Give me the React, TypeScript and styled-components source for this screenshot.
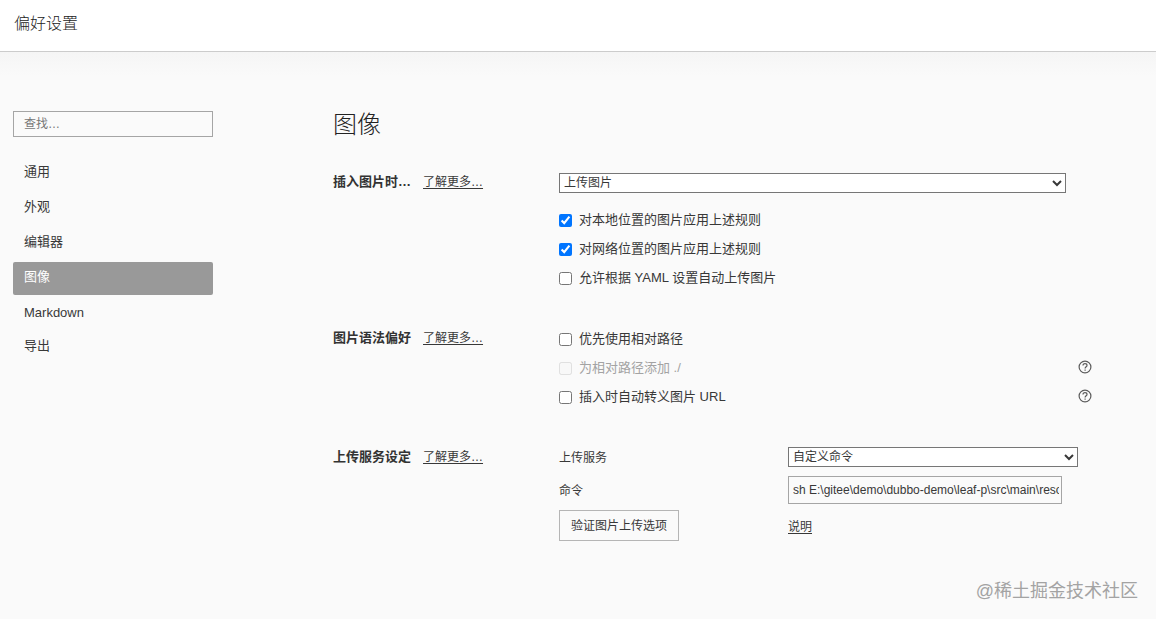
import React from 'react';
import styled, { createGlobalStyle } from 'styled-components';

const GlobalStyle = createGlobalStyle`
  * { box-sizing: border-box; }
  body {
    margin: 0;
    background: #fafafa;
    color: #383838;
    font-family: "Liberation Sans", "Noto Sans CJK SC", sans-serif;
    font-size: 13px;
  }
  input, select, button { font-family: inherit; color: inherit; margin: 0; }
`;

const Page = styled.div`
  position: relative;
  height: 619px;
  overflow: hidden;
  display: flex;
  flex-direction: column;
`;

const Header = styled.header`
  flex: none;
  height: 52px;
  padding: 0 14px;
  background: #fff;
  border-bottom: 1px solid #ccc;
  color: #222;
  font-size: 16px;
  font-weight: 300;
  line-height: 48px;
`;

const Body = styled.div`
  flex: 1;
  display: flex;
  background: linear-gradient(#f5f5f5, #fafafa 24px);
`;

const Sidebar = styled.aside`
  width: 200px;
  margin: 59px 120px 0 13px;
`;

const Search = styled.input`
  display: block;
  width: 200px;
  height: 26px;
  padding: 0 10px;
  border: 1px solid #a5a5a5;
  border-radius: 0;
  background: transparent;
  font-size: 12px;
  &::placeholder { color: #777; }
`;

const Nav = styled.nav`
  display: flex;
  flex-direction: column;
  gap: 2px;
  margin-top: 20px;
`;

const NavItem = styled.a<{ $active?: boolean; $latin?: boolean }>`
  height: ${p => (p.$latin ? 32 : 33)}px;
  padding-left: 11px;
  line-height: ${p => (p.$latin ? 31 : 30)}px;
  border-radius: 2px;
  background: ${p => (p.$active ? '#999' : 'transparent')};
  color: ${p => (p.$active ? '#fff' : 'inherit')};
`;

const Main = styled.main`
  width: 760px;
  padding-top: 55px;
`;

const Title = styled.h1`
  margin: 0 0 25px;
  color: #222;
  font-size: 24px;
  font-weight: 300;
  line-height: 36px;
`;

const Section = styled.section<{ $gap?: number }>`
  display: grid;
  grid-template-columns: 226px 533px;
  align-items: start;
  margin-bottom: ${p => p.$gap ?? 0}px;
`;

const Heading = styled.div`
  display: flex;
  gap: 12px;
  line-height: 28px;
`;

const Name = styled.strong`
  color: #333;
  font-weight: 700;
`;

const Link = styled.a`
  font-size: 12px;
  text-decoration: underline;
  text-underline-offset: 2px;
`;

const Fields = styled.div<{ $top: number }>`
  padding-top: ${p => p.$top}px;
`;

const Select = styled.select<{ $width: number }>`
  display: block;
  width: ${p => p.$width}px;
  height: 20px;
  padding: 0 2px 0 0;
  border: 1px solid #767676;
  border-radius: 0;
  background: #fff;
  font-size: 12px;
`;

const Options = styled.div<{ $top?: number }>`
  margin-top: ${p => p.$top ?? 0}px;
`;

const Option = styled.label<{ $disabled?: boolean }>`
  display: flex;
  align-items: center;
  height: 29px;
  color: ${p => (p.$disabled ? '#a3a3a3' : 'inherit')};
`;

const Checkbox = styled.input`
  width: 13px;
  height: 13px;
  flex: none;
  &:disabled { opacity: 0.6; }
`;

const OptionText = styled.span`
  flex: 1;
  margin-left: 7px;
  padding-bottom: 2px;
  line-height: 27px;
`;

const Help = styled.svg`
  flex: none;
  margin-bottom: 3px;
`;

const Service = styled.div`
  display: grid;
  grid-template-columns: 229px 290px;
  grid-template-rows: 20px 46px 25px;
  align-items: center;
  font-size: 12px;
`;

const Command = styled.input`
  width: 274px;
  height: 28px;
  padding: 0 2px 0 4px;
  border: 1px solid #a5a5a5;
  border-radius: 0;
  background: transparent;
  font-size: 12px;
`;

const Caption = styled.span`
  padding-bottom: 2px;
`;

const Button = styled.button`
  width: 120px;
  height: 31px;
  padding: 0 0 2px;
  border: 1px solid #b5b5b5;
  background: transparent;
  font-size: 12px;
`;

const Watermark = styled.div`
  position: absolute;
  right: 18px;
  bottom: 14px;
  font-size: 18px;
  line-height: 28px;
  color: #a3a3a3;
`;

const HelpIcon = () => (
  <Help width="14" height="14" viewBox="0 0 14 14" fill="none" stroke="#5c5c5c" strokeWidth="1.2">
    <circle cx="7" cy="7" r="5.9" />
    <path d="M5 5.6C5 4.4 5.8 3.7 7 3.7s2 .7 2 1.7C9 6.8 7.1 6.8 7.1 8.5M7.1 9.4v1.3" />
  </Help>
);

type CheckProps = { text: string; checked?: boolean; disabled?: boolean; help?: boolean };

const Check = ({ text, checked, disabled, help }: CheckProps) => (
  <Option $disabled={disabled}>
    <Checkbox type="checkbox" defaultChecked={checked} disabled={disabled} />
    <OptionText>{text}</OptionText>
    {help && <HelpIcon />}
  </Option>
);

const navItems = ['通用', '外观', '编辑器', '图像', 'Markdown', '导出'];

export default function App() {
  return (
    <Page>
      <GlobalStyle />
      <Header>偏好设置</Header>
      <Body>
        <Sidebar>
          <Search placeholder="查找…" />
          <Nav>
            {navItems.map(item => (
              <NavItem key={item} $active={item === '图像'} $latin={item === 'Markdown'}>
                {item}
              </NavItem>
            ))}
          </Nav>
        </Sidebar>
        <Main>
          <Title>图像</Title>
          <Section $gap={31}>
            <Heading>
              <Name>插入图片时…</Name>
              <Link>了解更多…</Link>
            </Heading>
            <Fields $top={5}>
              <Select $width={507}>
                <option>上传图片</option>
              </Select>
              <Options $top={13}>
                <Check text="对本地位置的图片应用上述规则" checked />
                <Check text="对网络位置的图片应用上述规则" checked />
                <Check text="允许根据 YAML 设置自动上传图片" />
              </Options>
            </Fields>
          </Section>
          <Section $gap={31}>
            <Heading>
              <Name>图片语法偏好</Name>
              <Link>了解更多…</Link>
            </Heading>
            <Fields $top={1}>
              <Options>
                <Check text="优先使用相对路径" />
                <Check text="为相对路径添加 ./" disabled help />
                <Check text="插入时自动转义图片 URL" help />
              </Options>
            </Fields>
          </Section>
          <Section>
            <Heading>
              <Name>上传服务设定</Name>
              <Link>了解更多…</Link>
            </Heading>
            <Fields $top={4}>
              <Service>
                <Caption>上传服务</Caption>
                <Select $width={290}>
                  <option>自定义命令</option>
                </Select>
                <Caption>命令</Caption>
                <Command defaultValue="sh E:\gitee\demo\dubbo-demo\leaf-p\src\main\resources\upload.sh" />
                <Button>验证图片上传选项</Button>
                <Link>说明</Link>
              </Service>
            </Fields>
          </Section>
        </Main>
      </Body>
      <Watermark>@稀土掘金技术社区</Watermark>
    </Page>
  );
}
